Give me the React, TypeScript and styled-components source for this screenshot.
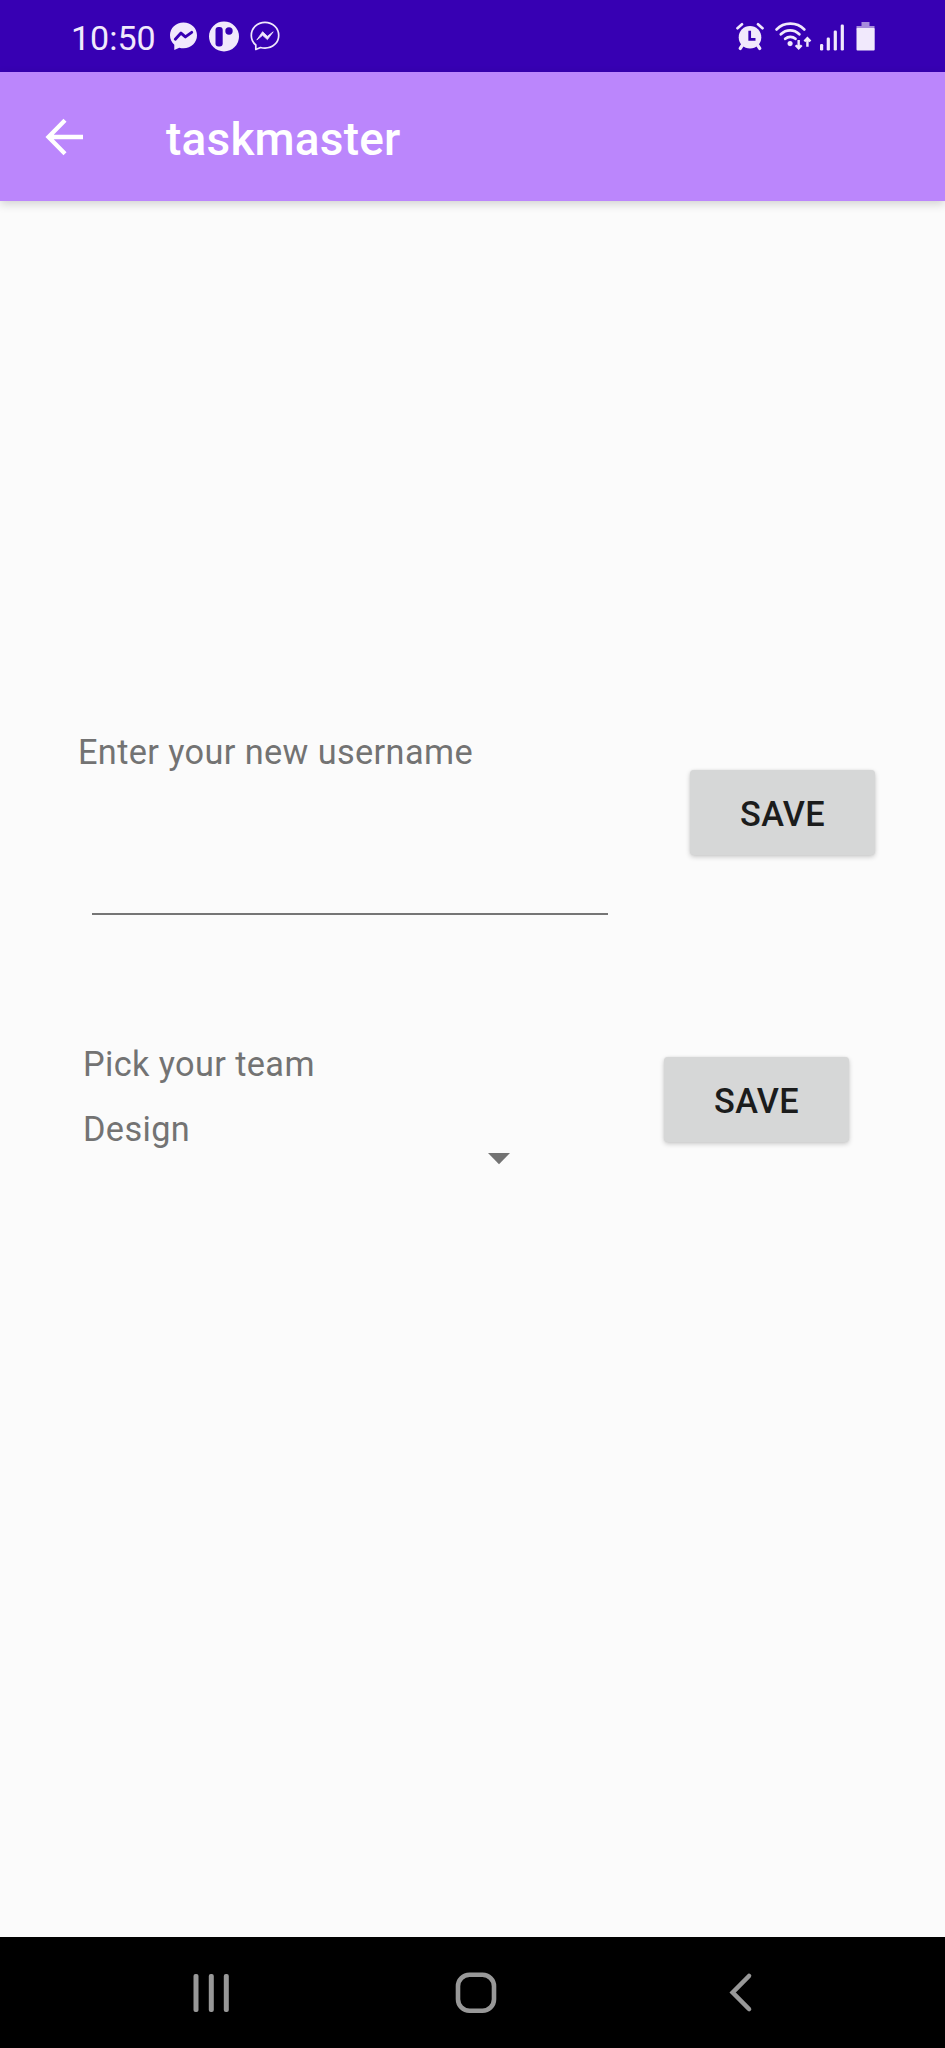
import React from "react";
import styled, { createGlobalStyle } from "styled-components";

const GlobalStyle = createGlobalStyle`
  * { box-sizing: border-box; }
  body {
    margin: 0;
    background: #fbfbfb;
    font-family: Roboto, "Liberation Sans", sans-serif;
  }
`;

const Screen = styled.div`
  display: flex;
  flex-direction: column;
  width: 945px;
  height: 2048px;
  overflow: hidden;
  background: #fbfbfb;
`;

const StatusBar = styled.header`
  display: flex;
  align-items: flex-start;
  justify-content: space-between;
  height: 72px;
  padding: 18px 69px 0 71px;
  background: #3700b3;
  color: #f1e9fc;
`;

const StatusGroup = styled.div<{ $gap: number }>`
  display: flex;
  align-items: center;
  gap: ${(p) => p.$gap}px;
  height: 36px;
`;

const Clock = styled.span`
  width: 87px;
  font-size: 34px;
  line-height: 40px;
  padding-top: 3px;
  white-space: nowrap;
`;

const AppBar = styled.div`
  display: flex;
  align-items: center;
  height: 129px;
  padding: 0 0 0 44px;
  background: #bb86fc;
  color: #ffffff;
  box-shadow: 0 3px 9px rgba(0, 0, 0, 0.17);
  z-index: 1;
`;

const IconButton = styled.button`
  display: flex;
  padding: 0;
  border: 0;
  background: none;
  color: inherit;
`;

const Title = styled.h1`
  margin: 5px 0 0 81px;
  font-size: 46px;
  font-weight: 500;
  line-height: 54px;
  letter-spacing: 0.2px;
`;

const Content = styled.main`
  display: flex;
  flex-direction: column;
  flex: 1;
  padding-top: 531px;
`;

const FormRow = styled.section<{ $left: number; $height: number }>`
  display: flex;
  align-items: flex-start;
  height: ${(p) => p.$height}px;
  padding-left: ${(p) => p.$left}px;
`;

const Field = styled.div<{ $width: number; $offset?: number }>`
  display: flex;
  flex-direction: column;
  width: ${(p) => p.$width}px;
  padding-top: ${(p) => p.$offset ?? 0}px;
`;

const Label = styled.label`
  height: 40px;
  color: #737373;
  font-size: 34.3px;
  line-height: 40px;
  letter-spacing: 0.38px;
  white-space: nowrap;
`;

const TextInput = styled.input`
  width: 516px;
  height: 115px;
  margin: 28px 0 0 14px;
  padding: 0;
  border: 0;
  border-bottom: 2px solid #757575;
  background: transparent;
  color: #222;
  font: 34px Roboto, sans-serif;
  outline: none;
`;

const Spinner = styled.div`
  display: flex;
  align-items: flex-start;
  justify-content: space-between;
  width: 427px;
  height: 66px;
  margin-top: 25px;
  color: #737373;
  font-size: 34.3px;
  line-height: 40px;
  letter-spacing: 0.35px;
`;

const Caret = styled.svg`
  margin-top: 44px;
`;

const SaveButton = styled.button<{ $top: number }>`
  width: 185px;
  height: 85px;
  margin-top: ${(p) => p.$top}px;
  padding: 3px 0 0;
  border: 0;
  border-radius: 4px;
  background: #d6d7d7;
  box-shadow: 0 2px 5px rgba(0, 0, 0, 0.2), 0 0 2px rgba(0, 0, 0, 0.08);
  color: #1b1c1c;
  font: 500 34.3px/40px Roboto, sans-serif;
  letter-spacing: 0.3px;
`;

const NavBar = styled.nav`
  display: flex;
  align-items: flex-start;
  justify-content: space-between;
  height: 111px;
  padding: 35px 192px 0;
  background: #000;
  color: #989898;
`;

const MessengerIcon = () => (
  <svg width="28" height="28" viewBox="-0.5 0 28 28">
    <path d="M14 .5C6.300.5.5 6 .5 13.300c0 3.900 1.600 7.100 4.300 9.400V28l5-2.300c1.300.4 2.700.5 4.200.5 7.700 0 13.500-5.600 13.500-12.900S21.700.5 14 .5Z" fill="currentColor" />
    <path d="m5.800 17.300 5.700-6.200 4.400 3.800 6.300-4.500" fill="none" stroke="#3700b3" strokeWidth="2.900" strokeLinejoin="round" strokeLinecap="round" />
  </svg>
);

const MessengerOutlineIcon = () => (
  <svg width="30" height="30" viewBox="0 0 30 30">
    <path d="M15 1.300C7.300 1.300 1.300 7 1.300 14.500c0 4 1.700 7.200 4.500 9.500v4.500l4.700-2c1.400.4 2.900.6 4.500.6 7.700 0 13.700-5.400 13.700-12.700S22.700 1.300 15 1.300Z" fill="none" stroke="currentColor" strokeWidth="1.700" strokeLinejoin="round" />
    <path d="m6.800 19 5.800-8.300 4.800 4.600 5.800-4.500-5.800 7.800-4.800-4.300Z" fill="currentColor" stroke="currentColor" strokeWidth=".8" strokeLinejoin="round" />
  </svg>
);

const PandoraIcon = () => (
  <svg width="31" height="31" viewBox="-1 0 31 31">
    <circle cx="15" cy="15.500" r="15" fill="currentColor" />
    <rect x="6.500" y="6" width="7.200" height="19.500" rx="3" fill="#3700b3" />
    <circle cx="20" cy="10" r="3.700" fill="#3700b3" />
  </svg>
);

const AlarmIcon = () => (
  <svg width="31" height="29" viewBox="0 0 31 29">
    <g fill="none" stroke="currentColor" strokeLinecap="round">
      <path d="M1.500 6.200 6 2.300M26.500 6.200 22 2.300" strokeWidth="2.700" />
      <path d="m6.500 23-2.300 3.500M21.500 23l2.300 3.500" strokeWidth="3.200" />
    </g>
    <circle cx="14" cy="15.200" r="11.300" fill="currentColor" />
    <path d="M13.700 8.800v8.500h5.800" fill="none" stroke="#3700b3" strokeWidth="2.700" />
  </svg>
);

const WifiIcon = () => (
  <svg width="37" height="30" viewBox="0 0 38 30">
    <g fill="none" stroke="currentColor" strokeWidth="2.900" strokeLinecap="round">
      <path d="M1.700 8.200C9 .3 22.500.3 30 8.200" />
      <path d="M6 13.200c5.500-5.300 13.500-5.300 19 0" />
      <path d="M10.500 17.800c3-2.600 7.500-2.600 10.500 0" />
    </g>
    <circle cx="15.500" cy="22.800" r="2.600" fill="currentColor" />
    <path d="M24.300 19v8M21.200 24.500l3.100 3.200 3.100-3.200M33.300 26v-8M30.200 20.500l3.100-3.200 3.100 3.200" fill="none" stroke="currentColor" strokeWidth="2.500" />
  </svg>
);

const SignalIcon = () => (
  <svg width="28" height="29" viewBox="0 0 28 29" fill="currentColor">
    <rect x="0" y="22" width="3.200" height="6.500" rx="1.300" />
    <rect x="6.700" y="15.500" width="3.200" height="13" rx="1.300" />
    <rect x="13.700" y="8.500" width="3.200" height="20" rx="1.300" />
    <rect x="20.700" y="2.500" width="3.200" height="26" rx="1.300" />
  </svg>
);

const BatteryIcon = () => (
  <svg width="20" height="29" viewBox="0 0 20 29">
    <path d="M5.500 0h8v4h5v3.500h-18V4h5Z" fill="#a78bdc" />
    <rect x=".5" y="6" width="18.200" height="22.500" rx="1" fill="currentColor" />
  </svg>
);

const BackArrow = () => (
  <svg width="41" height="40" viewBox="0 0 41 40" fill="none" stroke="currentColor" strokeWidth="4.300">
    <path d="M39 20H5M21 3.300 4.500 20 21 36.700" />
  </svg>
);

const App = () => (
  <Screen>
    <GlobalStyle />
    <StatusBar>
      <StatusGroup $gap={11}>
        <Clock>10:50</Clock>
        <MessengerIcon />
        <PandoraIcon />
        <MessengerOutlineIcon />
      </StatusGroup>
      <StatusGroup $gap={8}>
        <AlarmIcon />
        <WifiIcon />
        <SignalIcon />
        <BatteryIcon />
      </StatusGroup>
    </StatusBar>
    <AppBar>
      <IconButton aria-label="Navigate up"><BackArrow /></IconButton>
      <Title>taskmaster</Title>
    </AppBar>
    <Content>
      <FormRow $left={78} $height={311}>
        <Field $width={612}>
          <Label htmlFor="username">Enter your new username</Label>
          <TextInput id="username" />
        </Field>
        <SaveButton $top={38}>SAVE</SaveButton>
      </FormRow>
      <FormRow $left={83} $height={140}>
        <Field $width={581} $offset={1}>
          <Label>Pick your team</Label>
          <Spinner>
            <span>Design</span>
            <Caret width="22" height="12" viewBox="0 0 22 12"><path d="M0 0h22L11 11.300Z" fill="#737373" /></Caret>
          </Spinner>
        </Field>
        <SaveButton $top={14}>SAVE</SaveButton>
      </FormRow>
    </Content>
    <NavBar>
      <IconButton aria-label="Recents">
        <svg width="38" height="40" viewBox="0 0 38 40" fill="currentColor">
          <rect x="1.500" y="2" width="5" height="38" rx="2" />
          <rect x="16.800" y="2" width="5" height="38" rx="2" />
          <rect x="31.800" y="2" width="5" height="38" rx="2" />
        </svg>
      </IconButton>
      <IconButton aria-label="Home">
        <svg width="42" height="42" viewBox="0 0 42 42">
          <rect x="3" y="2.700" width="36" height="36" rx="11.500" fill="none" stroke="currentColor" strokeWidth="4.600" />
        </svg>
      </IconButton>
      <IconButton aria-label="Back">
        <svg width="31" height="42" viewBox="-7 0 31 42">
          <path d="M20 4 3.700 20.500 20 37" fill="none" stroke="currentColor" strokeWidth="4.600" strokeLinecap="round" />
        </svg>
      </IconButton>
    </NavBar>
  </Screen>
);

export default App;
